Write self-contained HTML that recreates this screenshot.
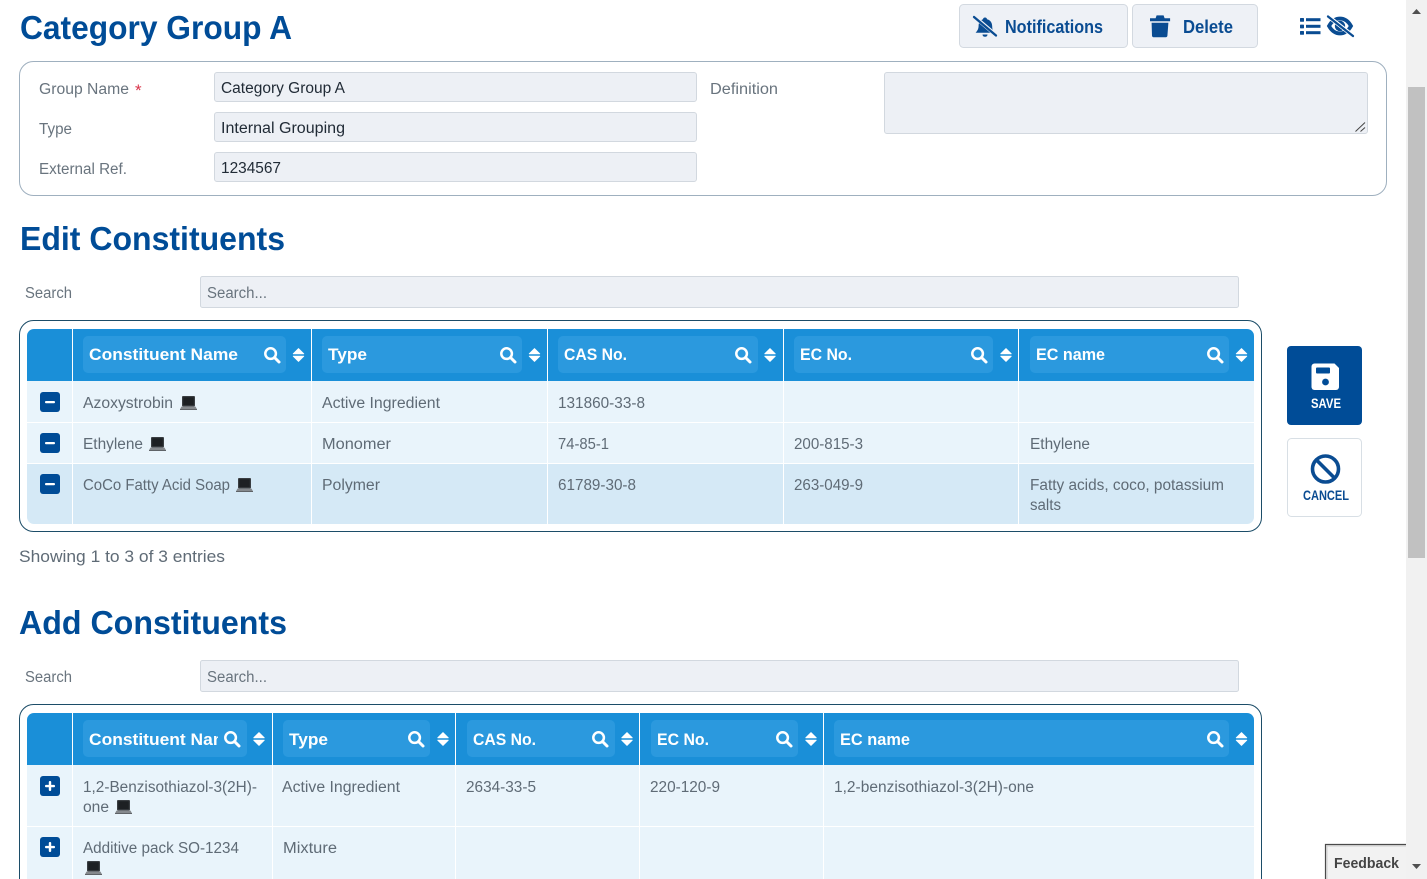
<!DOCTYPE html>
<html lang="en">
<head>
<meta charset="utf-8">
<title>Category Group A</title>
<style>
html,body{margin:0;padding:0;background:#fff;overflow:hidden;width:1427px;height:879px}
svg{display:block;position:absolute;left:0;top:0}
text{font-family:"Liberation Sans",sans-serif;white-space:pre}
.h{font-size:33px;font-weight:700;fill:#004c97}
.l{font-size:15.5px;fill:#69747e}
.v{font-size:15.5px;fill:#212b36}
.c{font-size:15.5px;fill:#5f6b76}
.th{font-size:16.5px;font-weight:700;fill:#fff}
.btn{font-size:18px;font-weight:700;fill:#0a4c92}
</style>
</head>
<body>
<svg width="1427" height="879" viewBox="0 0 1427 879" xmlns="http://www.w3.org/2000/svg">
<defs>
<g id="srch" fill="none" stroke="#fff"><circle cx="6.6" cy="6.6" r="5.3" stroke-width="2.5"/><path d="M10.5 10.5L15 15" stroke-width="3" stroke-linecap="round"/></g>
<g id="sort" fill="#fff"><path d="M5.5 .5L10.8 5.8H.2Z" stroke="#fff" stroke-width=".8" stroke-linejoin="round"/><path d="M.2 8.2H10.8L5.5 13.5Z" stroke="#fff" stroke-width=".8" stroke-linejoin="round"/></g>
<g id="lap"><rect x="2" y="0" width="13" height="10.5" rx="1" fill="#3a3e42"/><rect x="3.2" y="1.2" width="10.6" height="8" fill="#1d2023"/><path d="M1.4 10.6H15.6L17 13.4H0Z" fill="#85898d"/><rect x="0" y="13" width="17" height="1" fill="#5f6367"/></g>
<g id="minus"><rect width="20" height="20" rx="3" fill="#004c97"/><rect x="5" y="9" width="10" height="2.2" rx="1" fill="#fff"/></g>
<g id="plus"><rect width="20" height="20" rx="3" fill="#004c97"/><rect x="5" y="8.9" width="10" height="2.4" rx="1" fill="#fff"/><rect x="8.8" y="5" width="2.4" height="10" rx="1" fill="#fff"/></g>
<clipPath id="nameclip"><rect x="83" y="720" width="135" height="37"/></clipPath>
<clipPath id="t1"><rect x="27" y="329" width="1227" height="195" rx="7"/></clipPath>
<clipPath id="t2"><path d="M27 879V720a7 7 0 0 1 7-7H1247a7 7 0 0 1 7 7V879Z"/></clipPath>
</defs>

<!-- Scrollbar -->
<rect x="1406" y="0" width="21" height="879" fill="#f1f1f1"/>
<rect x="1408" y="87" width="17" height="471" fill="#c1c1c1"/>
<path d="M1412 14L1416.5 9L1421 14Z" fill="#505050"/>
<path d="M1412 864L1416.5 869L1421 864Z" fill="#505050"/>

<!-- Title and top actions -->
<text class="h" x="20" y="39" textLength="272" lengthAdjust="spacingAndGlyphs">Category Group A</text>

<rect x="959.5" y="4.5" width="168" height="43" rx="4" fill="#eef1f6" stroke="#d3d9e0"/>
<rect x="1132.5" y="4.5" width="125" height="43" rx="4" fill="#eef1f6" stroke="#d3d9e0"/>
<path d="M985 17.5c1.200 0 2 .8 2 1.800c3.600 .8 5.200 3.800 5.200 7.200c0 3 1 4.800 2.300 6.300H975.600c1.600-1.800 3-3.800 3-6.900c0-3.400 2-5.800 4.400-6.600c0-1 .8-1.800 2-1.800ZM982.500 34.500h5c0 1.500-1.100 2.300-2.500 2.300s-2.500-.8-2.500-2.300Z" fill="#0a4c92"/>
<path d="M973 15.500L997 36" stroke="#eef1f6" stroke-width="3.800"/>
<path d="M974 17L996 35.500" stroke="#0a4c92" stroke-width="2.300" stroke-linecap="round"/>
<text class="btn" x="1005" y="33" textLength="98" lengthAdjust="spacingAndGlyphs">Notifications</text>
<path d="M1150 18.200h5.600l1-2.800h7l1 2.800h5.500v3h-20.100Z" fill="#0a4c92"/>
<path d="M1151.600 22.800h16.800l-1 13a1.600 1.600 0 0 1-1.600 1.400h-12.200a1.600 1.600 0 0 1-1.600-1.400Z" fill="#0a4c92"/>
<text class="btn" x="1183" y="33" textLength="50" lengthAdjust="spacingAndGlyphs">Delete</text>

<g fill="#0a4c92">
<rect x="1300" y="18" width="4" height="3.800" rx=".7"/><rect x="1300" y="24.600" width="4" height="3.800" rx=".7"/><rect x="1300" y="31" width="4" height="3.800" rx=".7"/>
<rect x="1306" y="18.200" width="14.500" height="3"/><rect x="1306" y="24.800" width="14.500" height="3"/><rect x="1306" y="31.200" width="14.500" height="3"/>
</g>
<path d="M1329 26c2.800-5 6.500-7.500 11-7.500s8.200 2.500 11 7.500c-2.800 5-6.500 7.500-11 7.500s-8.200-2.500-11-7.500Z" fill="none" stroke="#0a4c92" stroke-width="3.800"/>
<circle cx="1340" cy="26" r="5.200" fill="#0a4c92"/>
<path d="M1327 15.500L1354 36.500" stroke="#fff" stroke-width="4"/>
<path d="M1328 16.500L1353 36" stroke="#0a4c92" stroke-width="2.300" stroke-linecap="round"/>

<!-- Form panel -->
<rect x="19.500" y="61.500" width="1367" height="134" rx="14" fill="#fff" stroke="#9fb0bf"/>
<text class="l" x="39" y="94" textLength="90" lengthAdjust="spacingAndGlyphs">Group Name</text>
<text x="135" y="96" style="font-size:17px;fill:#d9344a">*</text>
<text class="l" x="39" y="134" textLength="33" lengthAdjust="spacingAndGlyphs">Type</text>
<text class="l" x="39" y="174" textLength="88" lengthAdjust="spacingAndGlyphs">External Ref.</text>
<text class="l" x="710" y="94" textLength="68" lengthAdjust="spacingAndGlyphs">Definition</text>
<g fill="#edf0f5" stroke="#d2d8df">
<rect x="214.500" y="72.500" width="482" height="29" rx="2.500"/>
<rect x="214.500" y="112.500" width="482" height="29" rx="2.500"/>
<rect x="214.500" y="152.500" width="482" height="29" rx="2.500"/>
<rect x="884.500" y="72.500" width="483" height="61" rx="2.500"/>
</g>
<text class="v" x="221" y="93" textLength="124" lengthAdjust="spacingAndGlyphs">Category Group A</text>
<text class="v" x="221" y="133" textLength="124" lengthAdjust="spacingAndGlyphs">Internal Grouping</text>
<text class="v" x="221" y="173" textLength="60" lengthAdjust="spacingAndGlyphs">1234567</text>
<path d="M1355.500 131.500L1365 122.500M1360.500 131.500L1365 127.500" stroke="#444" stroke-width="1"/>

<!-- Edit Constituents -->
<text class="h" x="20" y="250" textLength="265" lengthAdjust="spacingAndGlyphs">Edit Constituents</text>
<text class="l" x="25" y="298" textLength="47" lengthAdjust="spacingAndGlyphs">Search</text>
<rect x="200.500" y="276.500" width="1038" height="31" rx="2" fill="#edf0f5" stroke="#d2d8df"/>
<text class="l" x="207" y="298" textLength="60" lengthAdjust="spacingAndGlyphs">Search...</text>

<rect x="19.500" y="320.500" width="1242" height="211" rx="14" fill="#fff" stroke="#1c4d68"/>
<g clip-path="url(#t1)">
<rect x="27" y="329" width="1227" height="52" fill="#1a8fd8"/>
<rect x="27" y="381" width="1227" height="41" fill="#e9f4fb"/>
<rect x="27" y="423" width="1227" height="40" fill="#e9f4fb"/>
<rect x="27" y="464" width="1227" height="60" fill="#d5e9f6"/>
<g fill="#fff">
<rect x="72" y="329" width="1" height="195"/><rect x="311" y="329" width="1" height="195"/><rect x="547" y="329" width="1" height="195"/><rect x="783" y="329" width="1" height="195"/><rect x="1018" y="329" width="1" height="195"/>
</g>
</g>
<g fill="#2b99de">
<rect x="83" y="336" width="203" height="37" rx="5"/>
<rect x="322" y="336" width="200" height="37" rx="5"/>
<rect x="558" y="336" width="200" height="37" rx="5"/>
<rect x="794" y="336" width="199" height="37" rx="5"/>
<rect x="1030" y="336" width="199" height="37" rx="5"/>
</g>
<text class="th" x="89" y="360" textLength="149" lengthAdjust="spacingAndGlyphs">Constituent Name</text>
<text class="th" x="328" y="360" textLength="39" lengthAdjust="spacingAndGlyphs">Type</text>
<text class="th" x="564" y="360" textLength="63" lengthAdjust="spacingAndGlyphs">CAS No.</text>
<text class="th" x="800" y="360" textLength="52" lengthAdjust="spacingAndGlyphs">EC No.</text>
<text class="th" x="1036" y="360" textLength="69" lengthAdjust="spacingAndGlyphs">EC name</text>
<use href="#srch" x="264" y="347"/><use href="#srch" x="500" y="347"/><use href="#srch" x="735" y="347"/><use href="#srch" x="971" y="347"/><use href="#srch" x="1207" y="347"/>
<use href="#sort" x="293" y="348"/><use href="#sort" x="529" y="348"/><use href="#sort" x="764.500" y="348"/><use href="#sort" x="1000.500" y="348"/><use href="#sort" x="1236" y="348"/>

<use href="#minus" x="40" y="392"/><use href="#minus" x="40" y="433"/><use href="#minus" x="40" y="474"/>
<text class="c" x="83" y="408" textLength="90" lengthAdjust="spacingAndGlyphs">Azoxystrobin</text><use href="#lap" x="180" y="396"/>
<text class="c" x="83" y="449" textLength="60" lengthAdjust="spacingAndGlyphs">Ethylene</text><use href="#lap" x="149" y="437"/>
<text class="c" x="83" y="490" textLength="147" lengthAdjust="spacingAndGlyphs">CoCo Fatty Acid Soap</text><use href="#lap" x="236" y="478"/>
<text class="c" x="322" y="408" textLength="118" lengthAdjust="spacingAndGlyphs">Active Ingredient</text>
<text class="c" x="322" y="449" textLength="69" lengthAdjust="spacingAndGlyphs">Monomer</text>
<text class="c" x="322" y="490" textLength="58" lengthAdjust="spacingAndGlyphs">Polymer</text>
<text class="c" x="558" y="408" textLength="87" lengthAdjust="spacingAndGlyphs">131860-33-8</text>
<text class="c" x="558" y="449" textLength="51" lengthAdjust="spacingAndGlyphs">74-85-1</text>
<text class="c" x="558" y="490" textLength="78" lengthAdjust="spacingAndGlyphs">61789-30-8</text>
<text class="c" x="794" y="449" textLength="69" lengthAdjust="spacingAndGlyphs">200-815-3</text>
<text class="c" x="794" y="490" textLength="69" lengthAdjust="spacingAndGlyphs">263-049-9</text>
<text class="c" x="1030" y="449" textLength="60" lengthAdjust="spacingAndGlyphs">Ethylene</text>
<text class="c" x="1030" y="490" textLength="194" lengthAdjust="spacingAndGlyphs">Fatty acids, coco, potassium</text>
<text class="c" x="1030" y="510" textLength="31" lengthAdjust="spacingAndGlyphs">salts</text>

<text x="19" y="562" textLength="206" lengthAdjust="spacingAndGlyphs" style="font-size:16.500px;fill:#5f6b76">Showing 1 to 3 of 3 entries</text>

<!-- Save / cancel -->
<rect x="1287" y="346" width="75" height="79" rx="4" fill="#004c97"/>
<path d="M1314.500 363.500h20l4.500 4.500v19a3 3 0 0 1-3 3h-21.500a3 3 0 0 1-3-3v-20.500a3 3 0 0 1 3-3Z" fill="#fff"/>
<rect x="1316" y="367.500" width="14" height="6" rx="1" fill="#004c97"/>
<circle cx="1325.500" cy="382" r="3.400" fill="#004c97"/>
<text x="1311" y="408" textLength="30" lengthAdjust="spacingAndGlyphs" style="font-size:14px;font-weight:700;fill:#fff">SAVE</text>
<rect x="1287.500" y="438.500" width="74" height="78" rx="4" fill="#fff" stroke="#d8dfe5"/>
<circle cx="1325.500" cy="469" r="13" fill="none" stroke="#0a4c92" stroke-width="3.600"/>
<path d="M1316.500 460L1334.500 478" stroke="#0a4c92" stroke-width="3.600"/>
<text x="1303" y="500" textLength="46" lengthAdjust="spacingAndGlyphs" style="font-size:14px;font-weight:700;fill:#0a4c92">CANCEL</text>

<!-- Add Constituents -->
<text class="h" x="19" y="634" textLength="268" lengthAdjust="spacingAndGlyphs">Add Constituents</text>
<text class="l" x="25" y="682" textLength="47" lengthAdjust="spacingAndGlyphs">Search</text>
<rect x="200.500" y="660.500" width="1038" height="31" rx="2" fill="#edf0f5" stroke="#d2d8df"/>
<text class="l" x="207" y="682" textLength="60" lengthAdjust="spacingAndGlyphs">Search...</text>

<rect x="19.500" y="704.500" width="1242" height="200" rx="14" fill="#fff" stroke="#1c4d68"/>
<g clip-path="url(#t2)">
<rect x="27" y="713" width="1227" height="52" fill="#1a8fd8"/>
<rect x="27" y="765" width="1227" height="61" fill="#e9f4fb"/>
<rect x="27" y="827" width="1227" height="52" fill="#e9f4fb"/>
<g fill="#fff">
<rect x="72" y="713" width="1" height="166"/><rect x="272" y="713" width="1" height="166"/><rect x="455" y="713" width="1" height="166"/><rect x="639" y="713" width="1" height="166"/><rect x="823" y="713" width="1" height="166"/>
</g>
</g>
<g fill="#2b99de">
<rect x="83" y="720" width="164" height="37" rx="5"/>
<rect x="283" y="720" width="147" height="37" rx="5"/>
<rect x="467" y="720" width="148" height="37" rx="5"/>
<rect x="651" y="720" width="147" height="37" rx="5"/>
<rect x="834" y="720" width="395" height="37" rx="5"/>
</g>
<g clip-path="url(#nameclip)"><text class="th" x="89" y="745" textLength="149" lengthAdjust="spacingAndGlyphs">Constituent Name</text></g>
<text class="th" x="289" y="745" textLength="39" lengthAdjust="spacingAndGlyphs">Type</text>
<text class="th" x="473" y="745" textLength="63" lengthAdjust="spacingAndGlyphs">CAS No.</text>
<text class="th" x="657" y="745" textLength="52" lengthAdjust="spacingAndGlyphs">EC No.</text>
<text class="th" x="840" y="745" textLength="70" lengthAdjust="spacingAndGlyphs">EC name</text>
<use href="#srch" x="224" y="731"/><use href="#srch" x="408" y="731"/><use href="#srch" x="592" y="731"/><use href="#srch" x="776" y="731"/><use href="#srch" x="1207" y="731"/>
<use href="#sort" x="253.500" y="732"/><use href="#sort" x="437.500" y="732"/><use href="#sort" x="621.500" y="732"/><use href="#sort" x="805.500" y="732"/><use href="#sort" x="1236" y="732"/>

<use href="#plus" x="40" y="776"/><use href="#plus" x="40" y="837"/>
<text class="c" x="83" y="792" textLength="174" lengthAdjust="spacingAndGlyphs">1,2-Benzisothiazol-3(2H)-</text>
<text class="c" x="83" y="812" textLength="26" lengthAdjust="spacingAndGlyphs">one</text><use href="#lap" x="115" y="800"/>
<text class="c" x="282" y="792" textLength="118" lengthAdjust="spacingAndGlyphs">Active Ingredient</text>
<text class="c" x="466" y="792" textLength="70" lengthAdjust="spacingAndGlyphs">2634-33-5</text>
<text class="c" x="650" y="792" textLength="70" lengthAdjust="spacingAndGlyphs">220-120-9</text>
<text class="c" x="834" y="792" textLength="200" lengthAdjust="spacingAndGlyphs">1,2-benzisothiazol-3(2H)-one</text>
<text class="c" x="83" y="853" textLength="156" lengthAdjust="spacingAndGlyphs">Additive pack SO-1234</text><use href="#lap" x="85" y="861"/>
<text class="c" x="283" y="853" textLength="54" lengthAdjust="spacingAndGlyphs">Mixture</text>

<!-- Feedback -->
<rect x="1325" y="844" width="81" height="36" fill="#f2f2f2"/>
<path d="M1325.500 880V844.500H1406" fill="none" stroke="#4a4a4a" stroke-width="1.200"/>
<path d="M1327 880V846H1406" fill="none" stroke="#cfcfcf" stroke-width="1"/>
<text x="1334" y="868" textLength="65" lengthAdjust="spacingAndGlyphs" style="font-size:14.500px;font-weight:700;fill:#444">Feedback</text>
</svg>
</body>
</html>
